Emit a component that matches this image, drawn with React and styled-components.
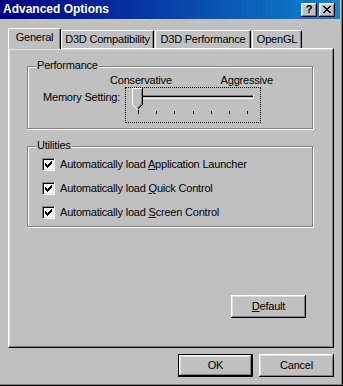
import React from "react";
import styled, { createGlobalStyle } from "styled-components";

const GlobalStyle = createGlobalStyle`
  html, body {
    margin: 0;
    padding: 0;
    background: #c0c0c0;
  }
  body {
    font-family: "Liberation Sans", Arial, sans-serif;
  }
`;

const Window = styled.div`
  width: 343px;
  height: 386px;
  box-sizing: border-box;
  background: #c0c0c0;
  border-right: 1px solid #000;
  border-bottom: 1px solid #000;
  box-shadow: inset -1px -1px 0 #808080;
  display: flex;
  flex-direction: column;
  color: #000;
  font-size: 11px;
  letter-spacing: -0.2px;
  line-height: 13px;
`;

const TitleBar = styled.div`
  height: 19px;
  margin-right: 2px;
  box-sizing: border-box;
  padding: 0 5px 0 3px;
  background: linear-gradient(90deg, #000080, #1084d0);
  display: flex;
  align-items: center;
  justify-content: space-between;
`;

const Title = styled.span`
  color: #fff;
  font-weight: bold;
  font-size: 12px;
  letter-spacing: 0;
`;

const TitleButtons = styled.div`
  display: flex;
  gap: 2px;
`;

const TitleButton = styled.div`
  width: 16px;
  height: 14px;
  box-sizing: border-box;
  background: #c0c0c0;
  box-shadow: inset -1px -1px #000, inset 1px 1px #fff, inset -2px -2px #808080,
    inset 2px 2px #dfdfdf;
  display: flex;
  align-items: center;
  justify-content: center;
  font-weight: bold;
  font-size: 11px;
  letter-spacing: 0;
`;

const Body = styled.div`
  padding: 9px 0 0 8px;
  display: flex;
  flex-direction: column;
`;

const TabRow = styled.div`
  display: flex;
  align-items: flex-end;
  height: 21px;
  margin-bottom: -1px;
  position: relative;
  z-index: 1;
`;

const Tab = styled.div`
  box-sizing: border-box;
  width: ${(p) => p.w}px;
  height: ${(p) => (p.active ? 21 : 18)}px;
  margin-bottom: ${(p) => (p.active ? 0 : 1)}px;
  margin-right: ${(p) => p.gap || 0}px;
  padding-top: 2px;
  border-top: 1px solid #fff;
  border-left: 1px solid #fff;
  border-right: 1px solid #000;
  border-radius: 2px 2px 0 0;
  box-shadow: inset -1px 0 #808080;
  background: #c0c0c0;
  text-align: center;
  white-space: nowrap;
`;

const Panel = styled.div`
  width: 326px;
  height: 300px;
  box-sizing: border-box;
  border-top: 1px solid #fff;
  border-left: 1px solid #fff;
  border-right: 1px solid #000;
  border-bottom: 1px solid #000;
  box-shadow: inset -1px -1px #808080, inset 1px 1px #dfdfdf;
  padding: 17px 0 0 18px;
  display: flex;
  flex-direction: column;
`;

const GroupBox = styled.div`
  position: relative;
  width: 286px;
  height: ${(p) => p.h}px;
  margin-top: ${(p) => p.mt || 0}px;
  box-sizing: border-box;
  border: 1px solid #808080;
  box-shadow: 1px 1px 0 #fff, inset 1px 1px 0 #fff;
  padding: ${(p) => p.pad};
`;

const GroupLabel = styled.span`
  position: absolute;
  top: -8px;
  left: 8px;
  padding: 0 1px;
  background: #c0c0c0;
`;

const ScaleLabels = styled.div`
  margin-left: 67px;
  width: 163px;
  display: flex;
  justify-content: space-between;
  height: 13px;
`;

const SliderRow = styled.div`
  display: flex;
  align-items: flex-start;
`;

const FieldLabel = styled.span`
  width: 82px;
  margin-top: 4px;
  white-space: nowrap;
`;

const SliderFrame = styled.div`
  width: 136px;
  height: 36px;
  box-sizing: border-box;
  border: 1px dotted #000;
  svg {
    display: block;
  }
`;

const CheckList = styled.div`
  display: flex;
  flex-direction: column;
  gap: 11px;
`;

const CheckRow = styled.label`
  display: flex;
  align-items: center;
  gap: 5px;
  height: 13px;
  white-space: nowrap;
`;

const CheckBox = styled.span`
  width: 13px;
  height: 13px;
  box-sizing: border-box;
  background: #fff;
  border-top: 1px solid #808080;
  border-left: 1px solid #808080;
  border-right: 1px solid #fff;
  border-bottom: 1px solid #fff;
  box-shadow: inset 1px 1px #000, inset -1px -1px #dfdfdf;
  display: flex;
  align-items: center;
  justify-content: center;
  flex-shrink: 0;
  svg {
    display: block;
  }
`;

const Spacer = styled.div`
  flex: 1;
`;

const Button = styled.button`
  width: 75px;
  height: 23px;
  box-sizing: border-box;
  padding: 0;
  border: none;
  background: #c0c0c0;
  color: #000;
  font: inherit;
  letter-spacing: inherit;
  box-shadow: ${(p) =>
    p.primary
      ? "inset 0 0 0 1px #000, inset -2px -2px #000, inset 2px 2px #fff, inset -3px -3px #808080, inset 3px 3px #dfdfdf"
      : "inset -1px -1px #000, inset 1px 1px #fff, inset -2px -2px #808080, inset 2px 2px #dfdfdf"};
`;

const DefaultButton = styled(Button)`
  align-self: flex-end;
  margin: 0 27px 29px 0;
`;

const ButtonRow = styled.div`
  width: 326px;
  margin-top: 6px;
  display: flex;
  justify-content: flex-end;
  gap: 6px;
`;

const Check = () => (
  <svg width="7" height="7" viewBox="0 0 7 7" shapeRendering="crispEdges">
    <path
      d="M6 0h1v1h-1zM5 1h2v1h-2zM0 2h1v1h-1zM4 2h3v1h-3zM0 3h2v1h-2zM3 3h3v1h-3zM0 4h5v1h-5zM1 5h3v1h-3zM2 6h1v1h-1z"
      fill="#000"
    />
  </svg>
);

const CloseGlyph = () => (
  <svg width="8" height="7" viewBox="0 0 8 7" shapeRendering="crispEdges">
    <path
      d="M0 0h2v1h-2zM6 0h2v1h-2zM1 1h2v1h-2zM5 1h2v1h-2zM2 2h4v1h-4zM3 3h2v1h-2zM2 4h4v1h-4zM1 5h2v1h-2zM5 5h2v1h-2zM0 6h2v1h-2zM6 6h2v1h-2z"
      fill="#000"
    />
  </svg>
);

const ticks = [12, 30, 48, 67, 85, 103, 121];

const Trackbar = () => (
  <svg width="134" height="34" viewBox="0 0 134 34" shapeRendering="crispEdges">
    <rect x="9" y="7" width="119" height="1" fill="#808080" />
    <rect x="9" y="8" width="1" height="3" fill="#808080" />
    <rect x="10" y="8" width="117" height="1" fill="#000" />
    <rect x="9" y="10" width="119" height="1" fill="#fff" />
    <rect x="127" y="7" width="1" height="4" fill="#fff" />
    {ticks.map((x, i) => (
      <rect key={x} x={x} y={i === 0 ? 22 : 23} width="1" height={i === 0 ? 4 : 3} fill="#000" />
    ))}
    <polygon points="6,0 17,0 17,16 11.5,21.5 6,16" fill="#c0c0c0" />
    <polyline points="6.5,16 6.5,0.5 16,0.5" fill="none" stroke="#fff" />
    <polyline points="6.5,16.5 11,21" fill="none" stroke="#fff" />
    <polyline points="16.5,0 16.5,16.5 11.5,21.5" fill="none" stroke="#000" />
    <polyline points="15.5,1 15.5,16 11.5,20" fill="none" stroke="#808080" />
  </svg>
);

const Option = ({ before, mnemonic, after }) => (
  <CheckRow>
    <CheckBox>
      <Check />
    </CheckBox>
    <span>
      {before}
      <u>{mnemonic}</u>
      {after}
    </span>
  </CheckRow>
);

const App = () => {
  return (
    <>
      <GlobalStyle />
      <Window>
        <TitleBar>
          <Title>Advanced Options</Title>
          <TitleButtons>
            <TitleButton>?</TitleButton>
            <TitleButton>
              <CloseGlyph />
            </TitleButton>
          </TitleButtons>
        </TitleBar>
        <Body>
          <TabRow>
            <Tab active w={53}>General</Tab>
            <Tab w={93} gap={1}>D3D Compatibility</Tab>
            <Tab w={96} gap={1}>D3D Performance</Tab>
            <Tab w={50}>OpenGL</Tab>
          </TabRow>
          <Panel>
            <GroupBox h={63} pad="7px 0 0 15px">
              <GroupLabel>Performance</GroupLabel>
              <ScaleLabels>
                <span>Conservative</span>
                <span>Aggressive</span>
              </ScaleLabels>
              <SliderRow>
                <FieldLabel>Memory Setting:</FieldLabel>
                <SliderFrame>
                  <Trackbar />
                </SliderFrame>
              </SliderRow>
            </GroupBox>
            <GroupBox h={81} mt={17} pad="11px 0 0 14px">
              <GroupLabel>Utilities</GroupLabel>
              <CheckList>
                <Option before="Automatically load " mnemonic="A" after="pplication Launcher" />
                <Option before="Automatically load " mnemonic="Q" after="uick Control" />
                <Option before="Automatically load " mnemonic="S" after="creen Control" />
              </CheckList>
            </GroupBox>
            <Spacer />
            <DefaultButton>
              <u>D</u>efault
            </DefaultButton>
          </Panel>
          <ButtonRow>
            <Button primary>OK</Button>
            <Button>Cancel</Button>
          </ButtonRow>
        </Body>
      </Window>
    </>
  );
};

export default App;
